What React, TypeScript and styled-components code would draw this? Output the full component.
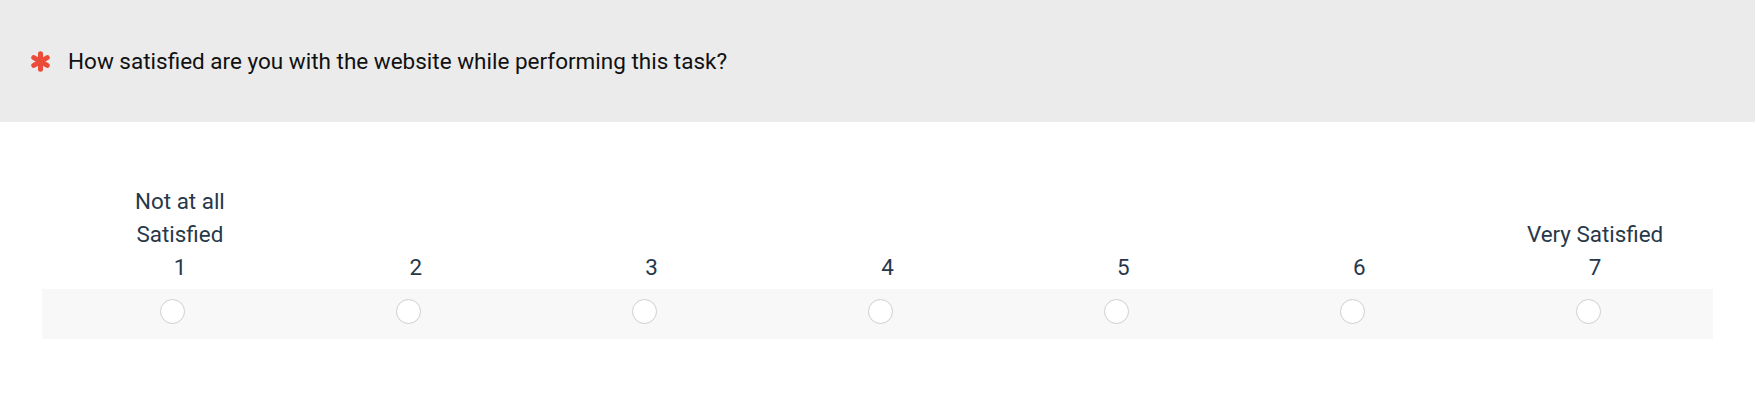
import React from "react";
import styled, { createGlobalStyle } from "styled-components";

const GlobalStyle = createGlobalStyle`
  html, body {
    margin: 0;
    padding: 0;
    background: #ffffff;
  }
  body {
    font-family: Roboto, "Liberation Sans", Arial, sans-serif;
  }
`;

const Page = styled.div`
  width: 1756px;
  background: #ffffff;
`;

const QuestionHeader = styled.div`
  display: flex;
  align-items: center;
  gap: 17px;
  height: 122px;
  margin-right: 1px;
  padding-left: 30px;
  background: #ebebeb;
  box-sizing: border-box;
`;

const RequiredMark = styled.svg`
  width: 21px;
  height: 21px;
  flex: none;
  margin-top: 1px;
`;

const QuestionText = styled.div`
  font-size: 22.5px;
  line-height: 26px;
  color: #111111;
`;

const Scale = styled.div`
  margin: 63px 43px 0 42px;
`;

const ScaleGrid = styled.div`
  display: grid;
  grid-template-columns: 20px repeat(7, 1fr);
`;

const HeadRow = styled(ScaleGrid)`
  align-items: end;
`;

const HeadCell = styled.div`
  display: flex;
  flex-direction: column;
  align-items: center;
  text-align: center;
  font-size: 22.4px;
  line-height: 33px;
  color: #27384a;
`;

const AnchorLabel = styled.div`
  max-width: 160px;
`;

const ScaleNumber = styled.div`
  line-height: 32px;
`;

const RadioRow = styled(ScaleGrid)`
  margin-top: 6px;
  height: 50px;
  background: #f8f8f8;
`;

const RadioCell = styled.label`
  display: flex;
  justify-content: center;
  align-items: flex-start;
  padding-top: 10px;
  cursor: pointer;
`;

const RadioCircle = styled.span`
  display: block;
  width: 25px;
  height: 25px;
  margin-right: 14px;
  border-radius: 50%;
  border: 1px solid #cfcfcf;
  background: #ffffff;
  box-sizing: border-box;
`;

const points = [
  { n: 1, label: "Not at all Satisfied" },
  { n: 2 },
  { n: 3 },
  { n: 4 },
  { n: 5 },
  { n: 6 },
  { n: 7, label: "Very Satisfied" },
] as { n: number; label?: string }[];

export default function App() {
  return (
    <Page>
      <GlobalStyle />
      <QuestionHeader>
        <RequiredMark viewBox="0 0 20 20" aria-hidden="true">
          <g stroke="#ea4c39" strokeWidth="4.8" strokeLinecap="round">
            <line x1="10" y1="2.6" x2="10" y2="17.4" />
            <line x1="3.6" y1="6.3" x2="16.4" y2="13.7" />
            <line x1="3.6" y1="13.7" x2="16.4" y2="6.3" />
          </g>
        </RequiredMark>
        <QuestionText>How satisfied are you with the website while performing this task?</QuestionText>
      </QuestionHeader>
      <Scale>
        <HeadRow>
          <div />
          {points.map((p) => (
            <HeadCell key={p.n}>
              {p.label && <AnchorLabel>{p.label}</AnchorLabel>}
              <ScaleNumber>{p.n}</ScaleNumber>
            </HeadCell>
          ))}
        </HeadRow>
        <RadioRow>
          <div />
          {points.map((p) => (
            <RadioCell key={p.n}>
              <RadioCircle />
            </RadioCell>
          ))}
        </RadioRow>
      </Scale>
    </Page>
  );
}
